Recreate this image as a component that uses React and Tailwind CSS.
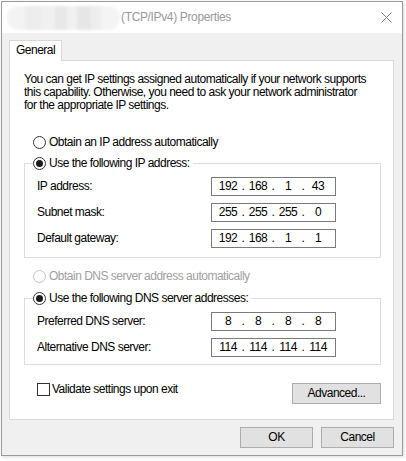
import React from 'react';

const Radio = ({ checked, disabled }) => (
  <span
    className={`flex h-[13px] w-[13px] shrink-0 items-center justify-center rounded-full border bg-white ${
      disabled ? 'border-[#c4c4c4]' : 'border-[#333333]'
    }`}
  >
    {checked && <span className="h-[7px] w-[7px] rounded-full bg-[#1a1a1a]" />}
  </span>
);

const IpBox = ({ parts }) => (
  <div className="flex h-[19px] w-[125px] items-center border border-[#7a7a7a] bg-white pl-[4px] text-black">
    {parts.map((p, i) => (
      <React.Fragment key={i}>
        {i > 0 && <span className="w-[6px] text-center">.</span>}
        <span className="w-[24px] text-center">{p}</span>
      </React.Fragment>
    ))}
  </div>
);

const Row = ({ label, parts }) => (
  <div className="flex h-[19px] items-center">
    <span className="w-[174px]">{label}</span>
    <IpBox parts={parts} />
  </div>
);

const Button = ({ children, className = '' }) => (
  <button className={`flex h-[21px] items-center justify-center border border-[#adadad] bg-[#e1e1e1] text-black ${className}`}>
    {children}
  </button>
);

export default function App() {
  return (
    <div className="h-[461px] w-[406px] overflow-hidden whitespace-nowrap bg-white pl-[1px] pt-[1px] font-['Liberation_Sans',Arial,sans-serif] text-[12px] leading-[13px] tracking-[-0.5px] text-black">
      <div className="flex h-[455px] w-[402px] flex-col border border-[#9a9a9a] bg-[#f0f0f0] shadow-[1px_1px_3px_rgba(0,0,0,0.15)]">
        {/* Title bar */}
        <div className="flex h-[31px] shrink-0 items-center bg-white">
          <div className="ml-[5px] flex h-[24px] w-[113px] overflow-hidden rounded-full blur-[1.5px]">
            <div className="w-[18px] bg-[#f3f3f3]" />
            <div className="w-[16px] bg-[#ececec]" />
            <div className="w-[14px] bg-[#f0f0f0]" />
            <div className="w-[12px] bg-[#e8e8e8]" />
            <div className="w-[10px] bg-[#f1f1f1]" />
            <div className="w-[14px] bg-[#e6e6e6]" />
            <div className="w-[10px] bg-[#ededed]" />
            <div className="flex-1 bg-[#f4f4f4]" />
          </div>
          <span className="ml-[1px] tracking-[-0.35px] text-[#999999]">(TCP/IPv4) Properties</span>
          <svg className="ml-auto mr-[10px]" width="11" height="11" viewBox="0 0 11 11">
            <path d="M0.5 0.5 L10.5 10.5 M10.5 0.5 L0.5 10.5" stroke="#7a7a7a" strokeWidth="1" fill="none" />
          </svg>
        </div>

        {/* Body */}
        <div className="flex flex-col pl-[7px] pt-[7px]">
          <div className="relative z-10 -mb-[1px] flex h-[21px] w-[53px] items-center border-x border-t border-[#d9d9d9] bg-white pb-[1px] pl-[6px]">
            General
          </div>

          <div className="flex w-[385px] flex-col border border-[#d9d9d9] bg-white pb-[15px] pl-[14px] pr-[12px] pt-[12px]">
            <p>
              You can get IP settings assigned automatically if your network supports
              <br />
              this capability. Otherwise, you need to ask your network administrator
              <br />
              for the appropriate IP settings.
            </p>

            <div className="ml-[9px] mt-[22px] flex h-[16px] items-center gap-[3px]">
              <Radio />
              <span>Obtain an IP address automatically</span>
            </div>

            <fieldset className="mt-[5px] w-[357px] border border-[#dcdcdc] px-0 pb-[9px] pt-[6px]">
              <legend className="ml-[8px] flex h-[16px] items-center gap-[3px] pr-[3px]">
                <Radio checked />
                <span>Use the following IP address:</span>
              </legend>
              <div className="flex flex-col gap-[7px] pl-[12px]">
                <Row label="IP address:" parts={['192', '168', '1', '43']} />
                <Row label="Subnet mask:" parts={['255', '255', '255', '0']} />
                <Row label="Default gateway:" parts={['192', '168', '1', '1']} />
              </div>
            </fieldset>

            <div className="ml-[9px] mt-[10px] flex h-[16px] items-center gap-[3px] text-[#a0a0a0]">
              <Radio disabled />
              <span>Obtain DNS server address automatically</span>
            </div>

            <fieldset className="mt-[6px] w-[357px] border border-[#dcdcdc] px-0 pb-[7px] pt-[6px]">
              <legend className="ml-[8px] flex h-[16px] items-center gap-[3px] pr-[3px]">
                <Radio checked />
                <span>Use the following DNS server addresses:</span>
              </legend>
              <div className="flex flex-col gap-[7px] pl-[12px]">
                <Row label="Preferred DNS server:" parts={['8', '8', '8', '8']} />
                <Row label="Alternative DNS server:" parts={['114', '114', '114', '114']} />
              </div>
            </fieldset>

            <div className="mt-[18px] flex items-start">
              <div className="ml-[13px] flex h-[13px] items-center gap-[2px]">
                <span className="h-[13px] w-[13px] border border-[#333333] bg-white" />
                <span>Validate settings upon exit</span>
              </div>
              <Button className="ml-auto w-[89px]">Advanced...</Button>
            </div>
          </div>

          <div className="mt-[7px] flex w-[385px] justify-end gap-[8px]">
            <Button className="w-[73px]">OK</Button>
            <Button className="w-[73px]">Cancel</Button>
          </div>
        </div>
      </div>
    </div>
  );
}
